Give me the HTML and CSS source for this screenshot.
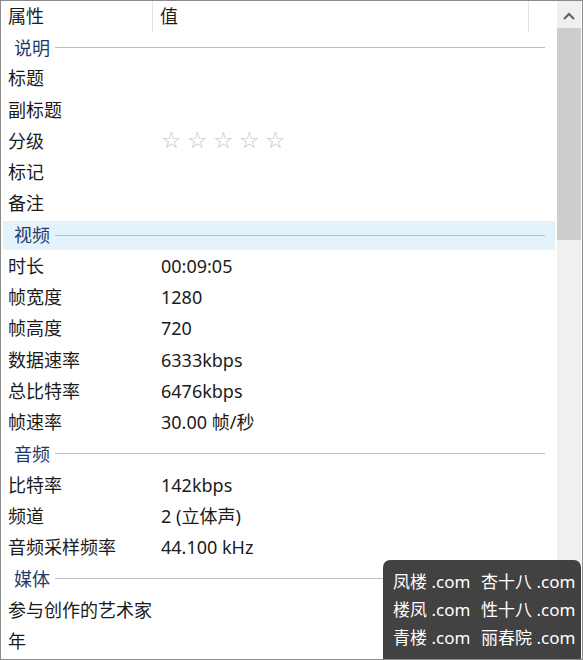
FILE: index.html
```html
<!DOCTYPE html>
<html lang="zh-CN">
<head>
    <meta charset="UTF-8">
    <title>详细信息</title>
    <link rel="stylesheet" href="styles.css">
</head>
<body>
    <div class="window">
        <div class="list">
            <div class="head">
                <div class="cell">属性</div>
                <div class="cell">值</div>
                <div class="cell"></div>
            </div>

            <div class="group"><span>说明</span><i></i></div>
            <div class="row"><span>标题</span><span></span></div>
            <div class="row"><span>副标题</span><span></span></div>
            <div class="row"><span>分级</span><span class="stars"><b>☆</b><b>☆</b><b>☆</b><b>☆</b><b>☆</b></span></div>
            <div class="row"><span>标记</span><span></span></div>
            <div class="row"><span>备注</span><span></span></div>

            <div class="group hover"><span>视频</span><i></i></div>
            <div class="row"><span>时长</span><span>00:09:05</span></div>
            <div class="row"><span>帧宽度</span><span>1280</span></div>
            <div class="row"><span>帧高度</span><span>720</span></div>
            <div class="row"><span>数据速率</span><span>6333kbps</span></div>
            <div class="row"><span>总比特率</span><span>6476kbps</span></div>
            <div class="row"><span>帧速率</span><span>30.00 帧/秒</span></div>

            <div class="group"><span>音频</span><i></i></div>
            <div class="row"><span>比特率</span><span>142kbps</span></div>
            <div class="row"><span>频道</span><span>2 (立体声)</span></div>
            <div class="row"><span>音频采样频率</span><span>44.100 kHz</span></div>

            <div class="group"><span>媒体</span><i></i></div>
            <div class="row"><span>参与创作的艺术家</span><span></span></div>
            <div class="row"><span>年</span><span></span></div>
        </div>

        <div class="scrollbar">
            <div class="arrow">
                <svg width="12" height="8" viewBox="0 0 12 8"><path d="M1 7 L6 2 L11 7" fill="none" stroke="#606060" stroke-width="2"/></svg>
            </div>
            <div class="thumb"></div>
        </div>

        <div class="stamp">
            <p><span>凤楼 .com</span><span>杏十八 .com</span></p>
            <p><span>楼凤 .com</span><span>性十八 .com</span></p>
            <p><span>青楼 .com</span><span>丽春院 .com</span></p>
        </div>
    </div>
</body>
</html>
```

FILE: styles.css
```css
body {
    margin: 0;
    background: #fff;
    font-family: "Noto Sans", "Noto Sans CJK SC", sans-serif;
    font-size: 18px;
    color: #1b1b1b;
}

.window {
    position: relative;
    width: 583px;
    height: 660px;
    box-sizing: border-box;
    border: 1px solid #8c8c8c;
    display: flex;
    overflow: hidden;
}

.list {
    flex: 1;
    overflow: hidden;
}

.head {
    display: grid;
    grid-template-columns: 152px 376px 1fr;
    height: 31px;
}

.head .cell {
    padding-left: 7px;
    line-height: 31px;
    border-right: 1px solid #e3e3e3;
}

.head .cell:last-child {
    border-right: none;
}

.row {
    display: grid;
    grid-template-columns: 152px 1fr;
    height: 31.25px;
    line-height: 30px;
}

.row span:first-child {
    padding-left: 7px;
}

.row span + span {
    padding-left: 8px;
}

.stars {
    display: flex;
    gap: 4px;
    color: #c4c4c4;
    font-family: "DejaVu Sans", sans-serif;
    font-size: 23px;
    line-height: 29px;
}

.stars b {
    font-weight: normal;
    width: 22px;
}

.group {
    display: flex;
    align-items: center;
    height: 31.25px;
    line-height: 28px;
    margin-left: 2px;
    margin-right: 2px;
    padding-left: 11px;
    color: #1e3a6c;
}

.group span {
    padding-right: 5px;
}

.group i {
    flex: 1;
    height: 1px;
    background: #b4c0cc;
    margin-right: 10px;
}

.group.hover {
    background: #e3f2fb;
    height: 29px;
    margin-top: 1px;
    margin-bottom: 1.25px;
}

.scrollbar {
    width: 24px;
    margin-right: 1px;
    background: #f0f0f0;
    padding-top: 2px;
}

.arrow {
    height: 25px;
    display: flex;
    align-items: center;
    justify-content: center;
}

.thumb {
    height: 212px;
    background: #cdcdcd;
}

.stamp {
    position: absolute;
    left: 382px;
    top: 559px;
    width: 198px;
    height: 110px;
    background: rgba(52, 52, 52, 0.93);
    border-radius: 7px;
    color: #fff;
    font-size: 17px;
    padding-top: 8px;
    box-sizing: border-box;
}

.stamp p {
    margin: 0;
    height: 28px;
    line-height: 28px;
    display: flex;
    padding-left: 10px;
}

.stamp span:first-child {
    width: 88px;
}
```
